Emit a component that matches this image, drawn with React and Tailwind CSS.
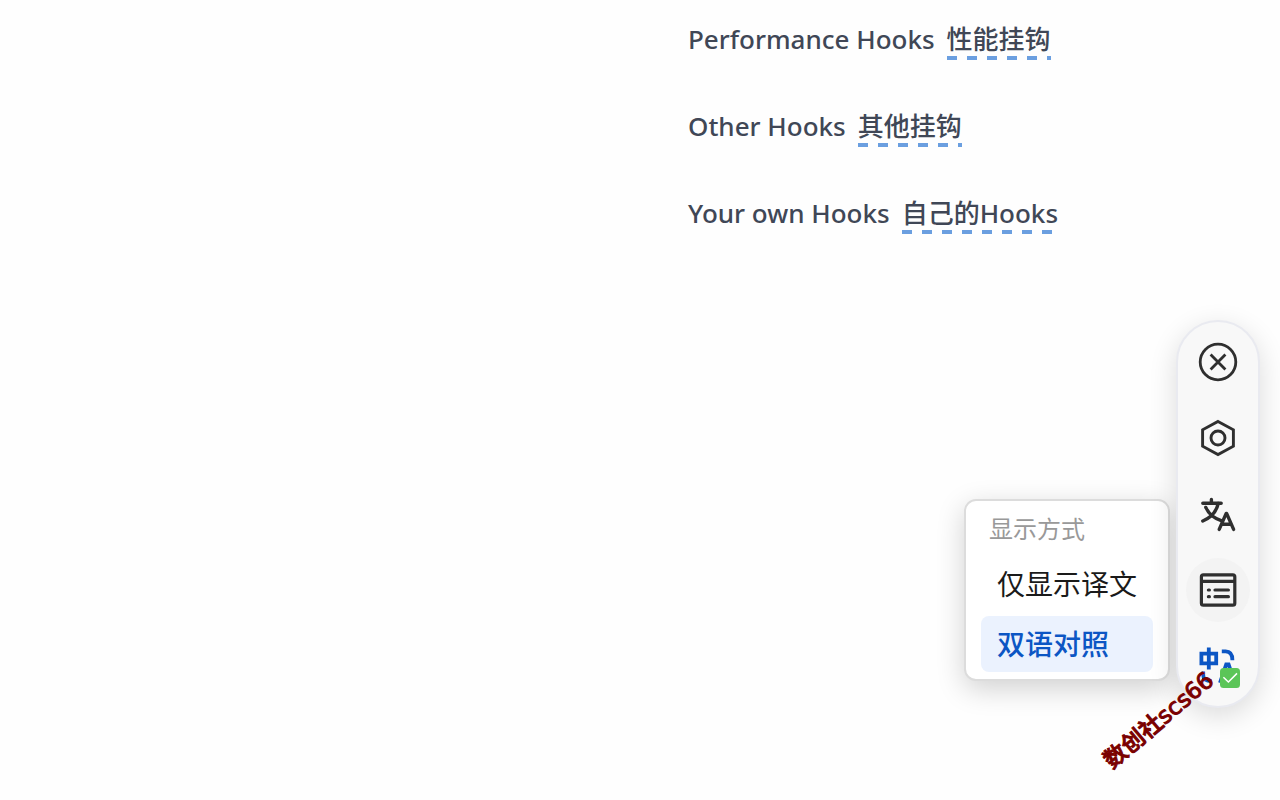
import React from 'react';

const hooks = [
    { label: 'Performance Hooks', translation: '性能挂钩' },
    { label: 'Other Hooks', translation: '其他挂钩' },
    { label: 'Your own Hooks', translation: '自己的Hooks' },
];

const displayModes = [
    { id: 'translated', label: '仅显示译文', active: false },
    { id: 'bilingual', label: '双语对照', active: true },
];

function CloseIcon() {
    return (
        <svg viewBox="0 0 64 64" className="w-16 h-16" fill="none" stroke="#2f2f2f" strokeWidth="2.8">
            <circle cx="32" cy="32" r="17.8" />
            <path d="M24.6 24.6l14.8 14.8M39.4 24.6L24.6 39.4" />
        </svg>
    );
}

function SettingsIcon() {
    return (
        <svg viewBox="0 0 64 64" className="w-16 h-16" fill="none" stroke="#2f2f2f" strokeWidth="2.9">
            <path d="M32 15.4l15.4 8.4v16.4L32 48.6l-15.4-8.4V23.8z" />
            <circle cx="32" cy="32" r="7" />
        </svg>
    );
}

function TranslateIcon() {
    return (
        <svg viewBox="0 0 64 64" className="w-16 h-16" fill="none" stroke="#2f2f2f" strokeWidth="3.4" strokeLinecap="round" strokeLinejoin="round">
            <path d="M25.4 17.4V21M16.8 21.2h18.4" />
            <path d="M32.2 21.4C30.4 30 25 35.5 16.8 39" />
            <path d="M19.8 25.4c2.8 6.4 8 10.8 15.4 13.2" />
            <path d="M33.2 47.4l7-16h.4l7 16M35.6 42.2h9.6" />
        </svg>
    );
}

function DisplayIcon() {
    return (
        <svg viewBox="0 0 64 64" className="w-16 h-16" fill="none" stroke="#2f2f2f" strokeWidth="3.2">
            <rect x="15.4" y="16.8" width="33.4" height="30.4" rx="2" />
            <path d="M15.4 23.4h33.4" />
            <path d="M22.4 32h1M22.4 38.7h1M29 32h13.4M29 38.7h13.4" strokeLinecap="round" />
        </svg>
    );
}

function BilingualIcon() {
    return (
        <svg viewBox="0 0 64 64" className="w-16 h-16" fill="none" stroke="#0c56c4" strokeWidth="3.8">
            <path d="M15.4 19.6h14.8v9.8H15.4zM22.8 13.6v22" />
            <path d="M35.8 17.4h3.8c4 0 6.8 2.6 6.8 8.8" />
            <path d="M17.2 37.6V41c0 4 3 6.2 8.6 6.2" />
            <path d="M34 48.8l6.2-18.4h2.4l6.2 18.4M37 43.4h9" />
            <rect x="34" y="34" width="20" height="20" rx="3.5" fill="#5bc558" stroke="none" />
            <path d="M37.4 43.2l5 4.8 8.6-8.6" stroke="#fff" strokeWidth="1.5" />
        </svg>
    );
}

const tools = [
    { label: '关闭', icon: CloseIcon },
    { label: '设置', icon: SettingsIcon },
    { label: '翻译', icon: TranslateIcon },
    { label: '显示方式', icon: DisplayIcon, active: true },
    { label: '中英切换', icon: BilingualIcon },
];

function HookList() {
    return (
        <ul className="col-start-2 pl-12 pt-[21px] flex flex-col gap-12">
            {hooks.map((hook) => (
                <li key={hook.label} className="flex gap-3 text-[26px] leading-[37px] font-medium text-[#404756] whitespace-nowrap">
                    <span>{hook.label}</span>
                    <span className="pb-0.5 bg-[repeating-linear-gradient(90deg,#6b9fe0_0_10px,transparent_10px_20px)] bg-[length:100%_4px] bg-bottom bg-no-repeat">
                        {hook.translation}
                    </span>
                </li>
            ))}
        </ul>
    );
}

function DisplayMenu() {
    return (
        <div className="w-[206px] px-[15px] pt-2 pb-[7px] flex flex-col gap-1 bg-white border-2 border-[#dcdcdc] rounded-xl shadow-[0_8px_28px_rgba(0,0,0,0.18)]">
            <p className="px-2 pb-[3px] text-2xl leading-10 text-[#999999]">显示方式</p>
            {displayModes.map((mode) => (
                <button
                    key={mode.id}
                    type="button"
                    className={`h-14 px-4 text-left text-[28px] rounded-lg whitespace-nowrap ${mode.active ? 'bg-[#ebf2fe] text-[#0c56c4] font-medium' : 'text-[#1a1a1a]'}`}
                >
                    {mode.label}
                </button>
            ))}
        </div>
    );
}

function Toolbar() {
    return (
        <div className="p-2 flex flex-col gap-3 bg-[#f8f8f8] border-2 border-[#e9eaf0] rounded-full shadow-[0_8px_28px_rgba(0,0,0,0.14)]">
            {tools.map((tool) => {
                const Icon = tool.icon;
                return (
                    <button
                        key={tool.label}
                        type="button"
                        aria-label={tool.label}
                        className={`rounded-full ${tool.active ? 'bg-[#f3f3f3]' : ''}`}
                    >
                        <Icon />
                    </button>
                );
            })}
        </div>
    );
}

export default function App() {
    return (
        <div className="relative min-h-screen overflow-hidden bg-[#fefefe] font-['Noto_Sans','Noto_Sans_CJK_SC',sans-serif]">
            <main className="grid grid-cols-2">
                <HookList />
            </main>

            {/* floating translate widget */}
            <div className="absolute right-5 top-80 flex items-end gap-[6px]">
                <div className="pb-[27px]">
                    <DisplayMenu />
                </div>
                <Toolbar />
            </div>

            <span className="absolute right-[54px] bottom-[66px] -rotate-40 text-[23px] leading-7 font-medium font-['DejaVu_Sans','Noto_Sans_CJK_SC',sans-serif] text-[#7a0000] [-webkit-text-stroke:1px_#7a0000] whitespace-nowrap pointer-events-none">
                数创社scs66
            </span>
        </div>
    );
}
